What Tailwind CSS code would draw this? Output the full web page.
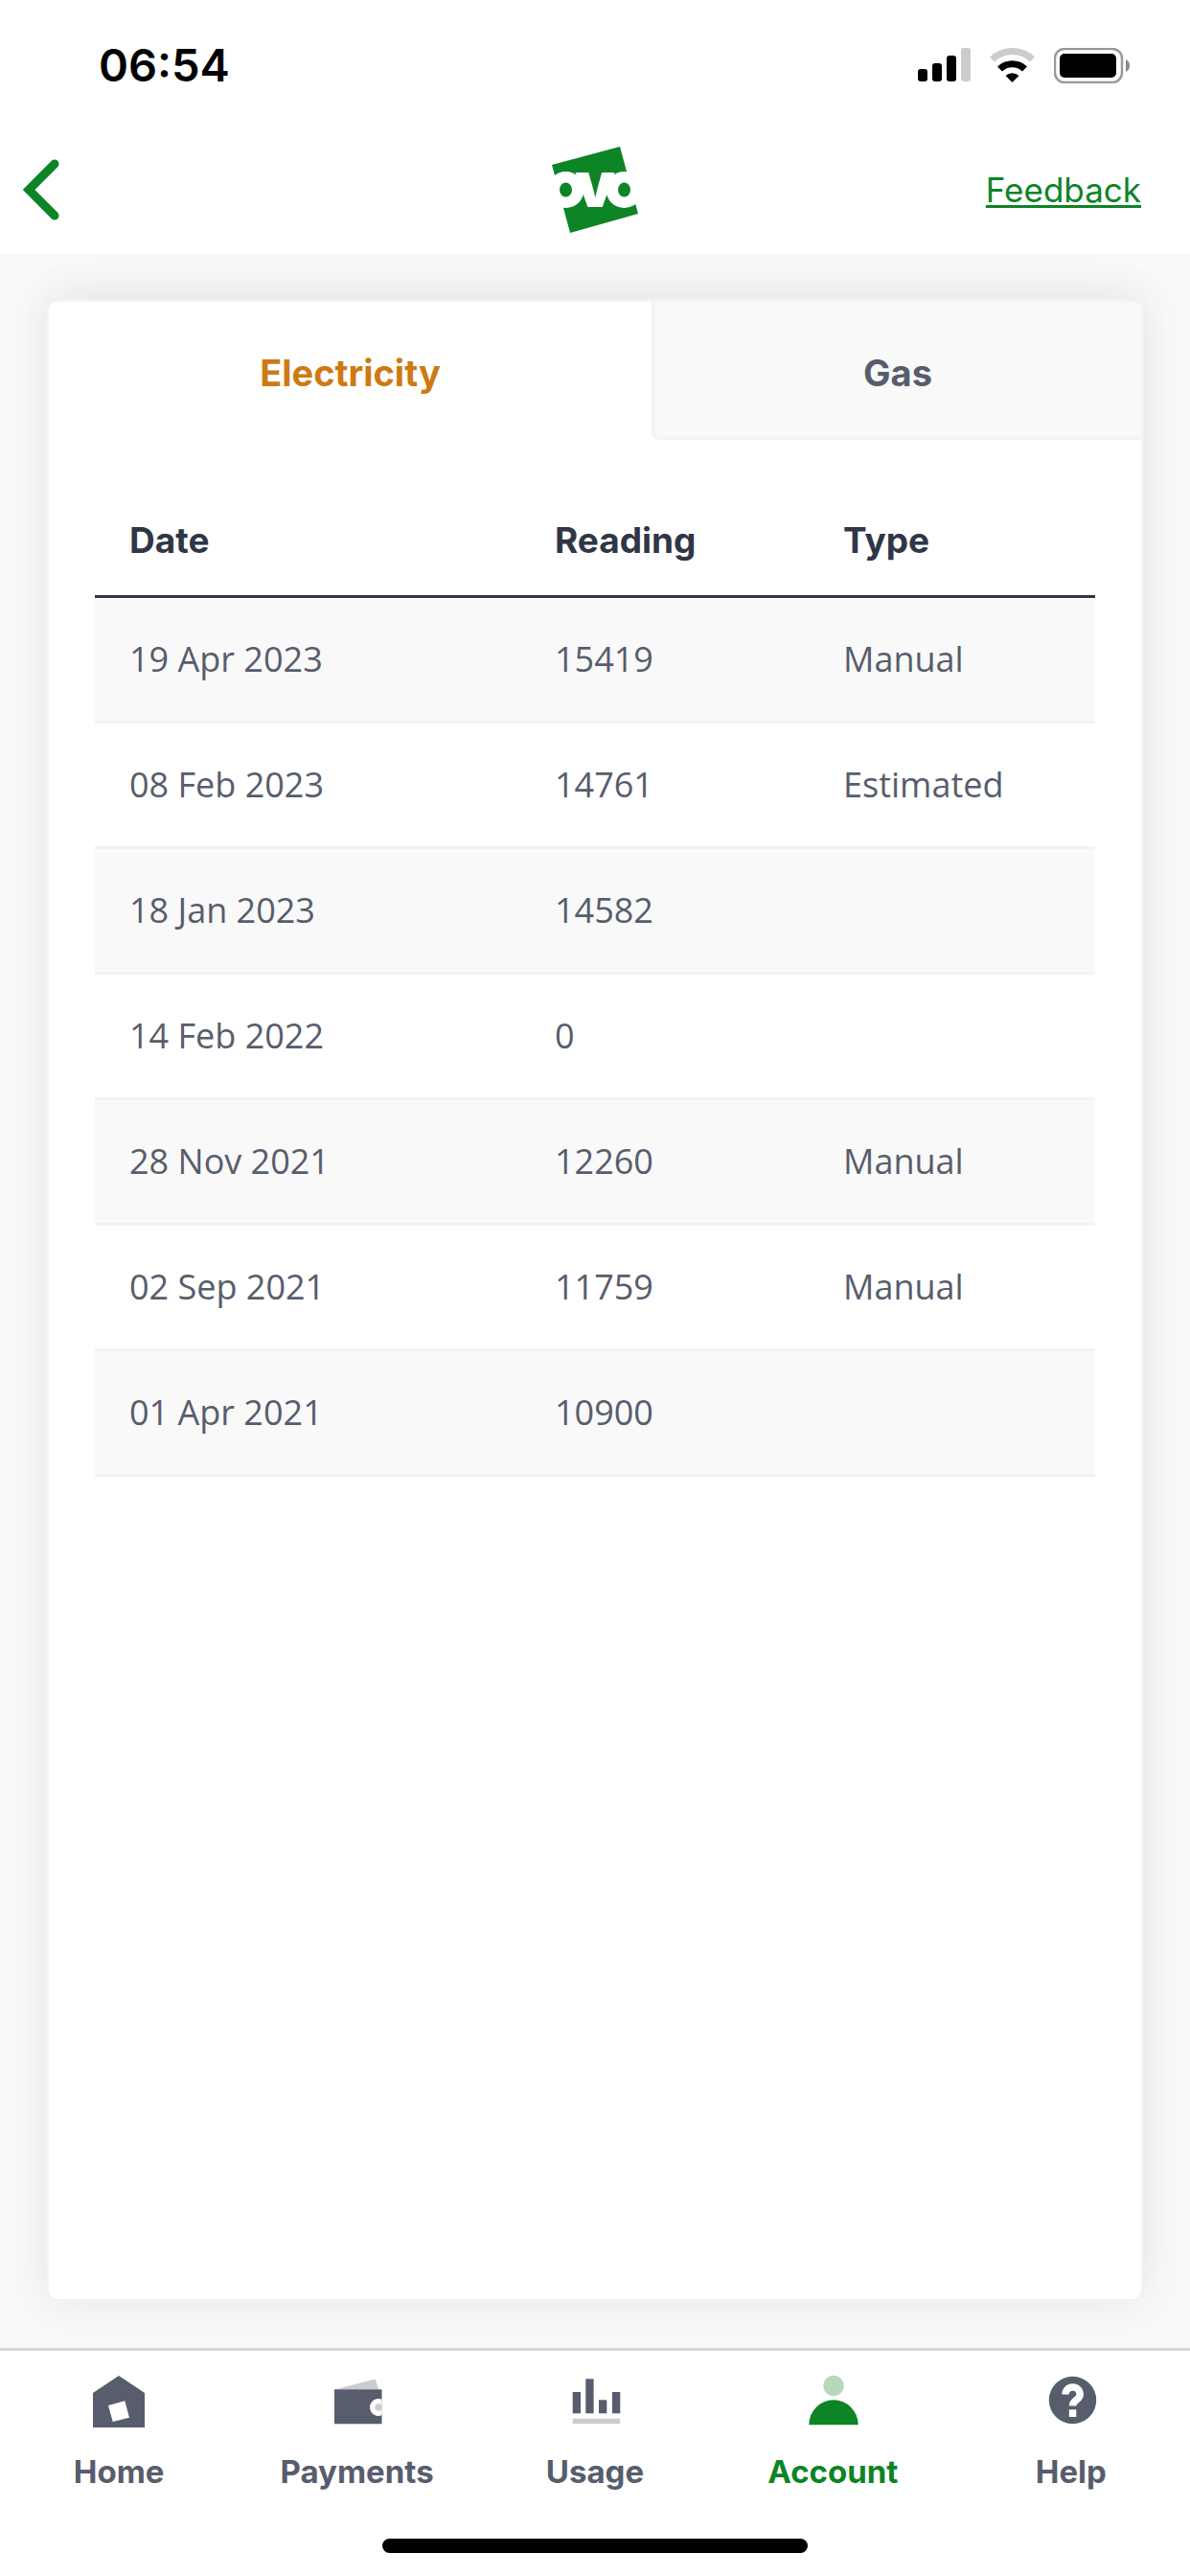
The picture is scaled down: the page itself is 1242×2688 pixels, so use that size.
<!DOCTYPE html>
<html lang="en">
<head>
  <meta charset="UTF-8">
  <meta name="viewport" content="width=device-width, initial-scale=1">
  <title>Meter readings</title>
  <script src="https://cdn.jsdelivr.net/npm/@tailwindcss/browser@4"></script>
</head>
<body class="flex flex-col min-h-screen bg-[#f9f9f9] font-['Inter',sans-serif] text-[#575d6c]">

  <!-- Status bar -->
  <div class="flex items-center justify-between h-[132px] pt-1 pl-[103px] pr-[63px] bg-white text-black">
    <span class="text-[47px] font-semibold">06:54</span>
    <div class="flex items-center gap-5">
      <svg class="w-[55px] h-9" viewBox="0 0 55 36">
        <rect x="0" y="22" width="10" height="13" rx="3"/>
        <rect x="15" y="16" width="10" height="19" rx="3"/>
        <rect x="30" y="8" width="10" height="27" rx="3"/>
        <rect x="45" y="0" width="10" height="35" rx="3" fill="#cccccc"/>
      </svg>
      <svg class="w-[47px] h-9" viewBox="0 0 47 36" fill="none">
        <path d="M2.500 12 A30 30 0 0 1 44.500 12" stroke="#cccccc" stroke-width="7"/>
        <path d="M10.500 22 A18.500 18.500 0 0 1 36.500 22" stroke="#000" stroke-width="7"/>
        <path d="M23.500 36 L16.500 29 A10.500 10.500 0 0 1 30.500 29 Z" fill="#000"/>
      </svg>
      <svg class="w-[79px] h-[37px]" viewBox="0 0 79 37">
        <rect x="1" y="1" width="70" height="35" rx="10" fill="none" stroke="#999999" stroke-width="2.500"/>
        <rect x="6" y="6" width="59" height="25" rx="5"/>
        <path d="M75 12 q4 2 4 6.500 t-4 6.500 z" fill="#888888"/>
      </svg>
    </div>
  </div>

  <!-- Header -->
  <header class="grid grid-cols-[1fr_100px_1fr] items-center h-[132px] bg-white">
    <button aria-label="Back" class="justify-self-start pl-6">
      <svg class="w-10 h-16" viewBox="0 0 40 64" fill="none" stroke="#0d8426" stroke-width="9" stroke-linecap="round">
        <path d="M33 5 L6 32 L33 59"/>
      </svg>
    </button>
    <svg class="w-[100px] h-[100px]" viewBox="0 0 100 100" role="img" aria-label="OVO">
      <polygon points="5,24 76,5 95,75 24,95" fill="#0d8426"/>
      <circle cx="19.500" cy="50" r="19" fill="#fff"/>
      <circle cx="80.500" cy="50" r="19" fill="#fff"/>
      <text x="50" y="68" text-anchor="middle" font-size="66" font-weight="900" fill="#fff">v</text>
      <ellipse cx="19.500" cy="50" rx="6.500" ry="7.500" fill="#0d8426"/>
      <ellipse cx="80.500" cy="50" rx="6.500" ry="7.500" fill="#0d8426"/>
    </svg>
    <a href="#" class="justify-self-end pr-[51px] text-[35px] text-[#0d8426] underline decoration-3 underline-offset-3">Feedback</a>
  </header>

  <main class="flex flex-col flex-1 p-12 overflow-hidden">
    <section class="flex-1 bg-white border-3 border-[#f3f3f3] rounded-xl overflow-hidden shadow-[0_0_48px_rgba(0,0,0,0.08),0_-24px_48px_rgba(0,0,0,0.02)]">

      <!-- Fuel tabs -->
      <div class="flex h-36 text-[38px] font-bold">
        <button class="w-[629px] pt-2 border-b-3 border-transparent text-[#cd7a14]">Electricity</button>
        <button class="flex-1 pt-2 bg-[#f9f9f9] border-l-3 border-b-3 border-[#f3f3f3] rounded-bl-lg">Gas</button>
      </div>

      <!-- Readings -->
      <div class="p-12">
        <table class="w-full table-fixed text-left text-[36px]">
          <thead class="text-[37px] text-[#2f3645]">
            <tr class="h-[115px] border-b-3 border-[#2f3645]">
              <th class="w-[444px] px-9 font-bold">Date</th>
              <th class="w-[301px] px-9 font-bold">Reading</th>
              <th class="px-9 font-bold">Type</th>
            </tr>
          </thead>
          <tbody class="font-['Open_Sans','Noto_Sans',sans-serif]">
            <tr class="h-[131px] border-b-3 border-[#f2f2f5] odd:bg-[#f9f9f9]">
              <td class="px-9">19 Apr 2023</td>
              <td class="px-9">15419</td>
              <td class="px-9">Manual</td>
            </tr>
            <tr class="h-[131px] border-b-3 border-[#f2f2f5] odd:bg-[#f9f9f9]">
              <td class="px-9">08 Feb 2023</td>
              <td class="px-9">14761</td>
              <td class="px-9">Estimated</td>
            </tr>
            <tr class="h-[131px] border-b-3 border-[#f2f2f5] odd:bg-[#f9f9f9]">
              <td class="px-9">18 Jan 2023</td>
              <td class="px-9">14582</td>
              <td class="px-9"></td>
            </tr>
            <tr class="h-[131px] border-b-3 border-[#f2f2f5] odd:bg-[#f9f9f9]">
              <td class="px-9">14 Feb 2022</td>
              <td class="px-9">0</td>
              <td class="px-9"></td>
            </tr>
            <tr class="h-[131px] border-b-3 border-[#f2f2f5] odd:bg-[#f9f9f9]">
              <td class="px-9">28 Nov 2021</td>
              <td class="px-9">12260</td>
              <td class="px-9">Manual</td>
            </tr>
            <tr class="h-[131px] border-b-3 border-[#f2f2f5] odd:bg-[#f9f9f9]">
              <td class="px-9">02 Sep 2021</td>
              <td class="px-9">11759</td>
              <td class="px-9">Manual</td>
            </tr>
            <tr class="h-[131px] border-b-3 border-[#f2f2f5] odd:bg-[#f9f9f9]">
              <td class="px-9">01 Apr 2021</td>
              <td class="px-9">10900</td>
              <td class="px-9"></td>
            </tr>
          </tbody>
        </table>
      </div>
    </section>
  </main>

  <!-- Bottom navigation -->
  <footer class="bg-white border-t-3 border-[#d6d7d7] pt-[23px] pb-6">
    <nav class="grid grid-cols-5 text-[33px] leading-[48px] font-bold">
      <a href="#" class="flex flex-col items-center gap-[19px]">
        <svg class="w-[60px] h-[60px]" viewBox="0 0 60 60">
          <path d="M3 21 L30 3 L57 21 V57 H3 Z" fill="#575d6c"/>
          <path d="M19 34 L36.300 29.300 L41 46.700 L23.700 51 Z" fill="#fff"/>
        </svg>
        Home
      </a>
      <a href="#" class="flex flex-col items-center gap-[19px]">
        <svg class="w-[60px] h-[60px]" viewBox="0 0 60 60">
          <path d="M6 17.500 L48.500 6.500 L52.500 17.500 Z" fill="#cbccd0"/>
          <rect x="6" y="17.300" width="49.500" height="36" fill="#575d6c"/>
          <path d="M55.500 27.700 A9 9 0 1 0 55.500 44.300 Z" fill="#fff"/>
          <path d="M55.500 34.500 A3.800 3.800 0 1 0 55.500 37.500 Z" fill="#cbccd0"/>
        </svg>
        Payments
      </a>
      <a href="#" class="flex flex-col items-center gap-[19px]">
        <svg class="w-[60px] h-[60px]" viewBox="0 0 60 60" fill="#575d6c">
          <rect x="6.700" y="20" width="8.300" height="22.300"/>
          <rect x="20.300" y="6.300" width="8.300" height="36"/>
          <rect x="34" y="28.300" width="8.300" height="14"/>
          <rect x="48" y="20" width="8.300" height="22.300"/>
          <rect x="6.700" y="47.700" width="49.500" height="5.500" fill="#cbccd0"/>
        </svg>
        Usage
      </a>
      <a href="#" class="flex flex-col items-center gap-[19px] text-[#0d8426]">
        <svg class="w-[60px] h-[60px]" viewBox="0 0 60 60">
          <circle cx="31" cy="13.500" r="10.700" fill="#b4d9bb"/>
          <path d="M5.300 54.300 A25.700 26 0 0 1 56.700 54.300 Z" fill="#0d8426"/>
        </svg>
        Account
      </a>
      <a href="#" class="flex flex-col items-center gap-[19px]">
        <svg class="w-[60px] h-[60px]" viewBox="0 0 60 60">
          <circle cx="31.500" cy="28.500" r="24.700" fill="#575d6c"/>
          <path d="M24 22.500 a7.600 7.600 0 0 1 15.200 0 c0 6 -7.700 5.500 -7.700 12" fill="none" stroke="#fff" stroke-width="7.500"/>
          <rect x="27.800" y="38.300" width="7.500" height="7.700" fill="#fff"/>
        </svg>
        Help
      </a>
    </nav>
    <div class="w-[444px] h-[15px] mt-[46px] mx-auto rounded-full bg-black"></div>
  </footer>

</body>
</html>
